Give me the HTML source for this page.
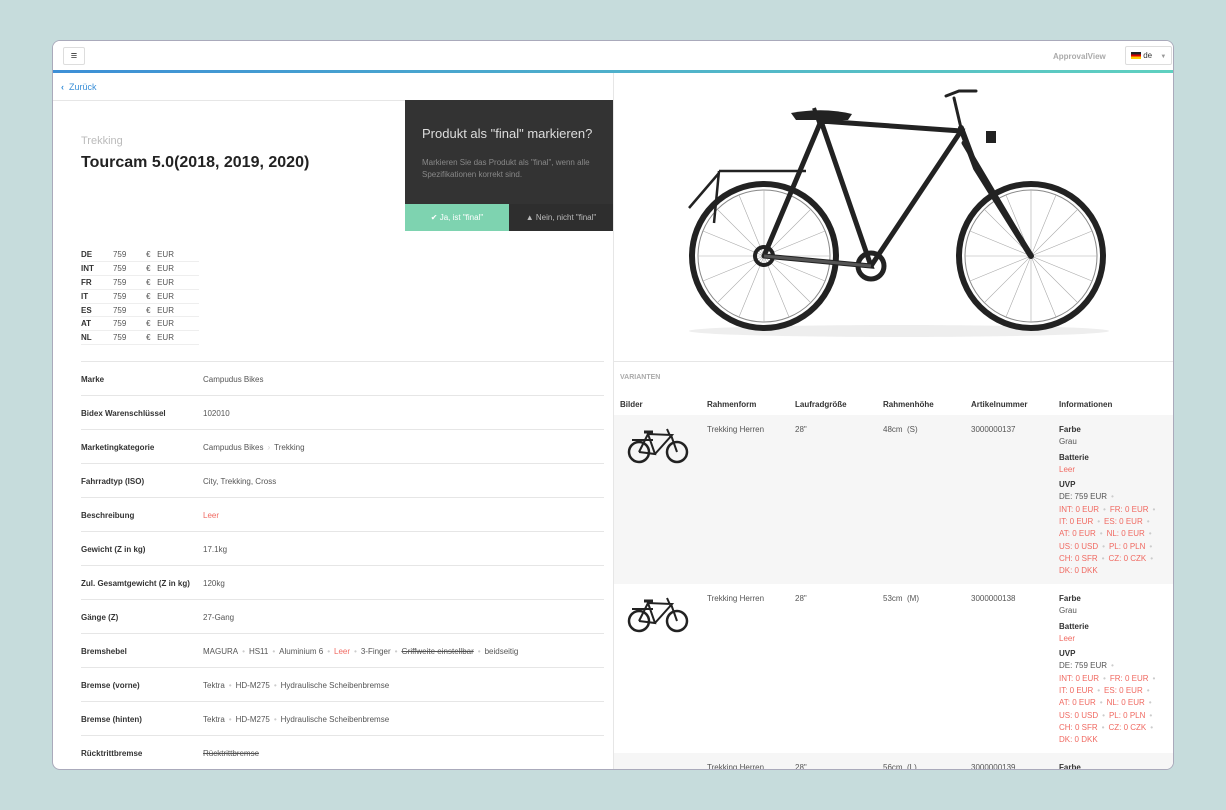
<!DOCTYPE html>
<html><head><meta charset="utf-8"><style>
*{box-sizing:border-box;margin:0;padding:0}
body{width:1226px;height:810px;background:#c6dcdc;font-family:"Liberation Sans",sans-serif;position:relative;overflow:hidden;color:#333}
.win{position:absolute;left:52px;top:40px;width:1122px;height:730px;background:#fff;border-radius:8px;overflow:hidden;border:1px solid #aab}
.abs{position:absolute}
.hdr{left:0;top:0;width:100%;height:29px;background:#fff}
.grad{left:0;top:29px;width:100%;height:3px;background:linear-gradient(90deg,#3d8fd6,#5fd0c0)}
.burger{left:10px;top:6px;width:22px;height:18px;border:1px solid #ddd;border-radius:2px;font-size:11px;text-align:center;line-height:16px}
.spec{position:absolute;left:28px;width:523px;height:34px;border-top:1px solid #e6e6e6;font-size:8px}
.spec b{position:absolute;left:0;top:13px;color:#333}
.spec span{position:absolute;left:122px;top:13px;color:#555}
.dot{color:#ccc;margin:0 4px}
.red,.spec span.red{color:#f06a62}
.pt td{font-size:8px;height:13.8px;border-bottom:1px solid #eee;color:#555;padding:0}
.th{position:absolute;top:359px;font-size:8px;font-weight:bold;color:#333}
.info{position:absolute;left:445px;font-size:8px;line-height:12.3px;color:#555}
.info b{color:#333}
.c{position:absolute;font-size:8px;color:#555}
</style></head><body>
<div class="win">
<div class="abs hdr"></div>
<div class="abs burger">≡</div>
<div class="abs" style="left:1000px;top:11px;font-size:8px;color:#aaa;font-weight:bold">ApprovalView</div>
<div class="abs" style="left:1072px;top:5px;width:47px;height:19px;border:1px solid #ddd;border-radius:2px;font-size:8px;line-height:17px;padding-left:5px"><span style="display:inline-block;width:10px;height:7px;background:linear-gradient(#222 33%,#d00 33% 66%,#fc0 66%);vertical-align:-1px"></span> de <span style="color:#999;margin-left:6px;font-size:6px">▼</span></div>
<div class="abs grad"></div>
<div class="abs" style="left:560px;top:32px;width:1px;height:700px;background:#e6e6e6"></div>
<div class="abs" style="left:0;top:59px;width:560px;height:1px;background:#e6e6e6"></div>
<div class="abs" style="left:8px;top:41px;font-size:9px;color:#3a8fd8"><b>‹</b>&nbsp; Zurück</div>
<div class="abs" style="left:28px;top:94px;font-size:11px;color:#bbb">Trekking</div>
<div class="abs" style="left:28px;top:113px;font-size:16px;font-weight:bold;color:#222">Tourcam 5.0(2018, 2019, 2020)</div>
<div class="abs" style="left:352px;top:59px;width:208px;height:104px;background:#333"></div>
<div class="abs" style="left:369px;top:85px;font-size:13px;color:#ddd">Produkt als "final" markieren?</div>
<div class="abs" style="left:369px;top:116px;font-size:8px;color:#888;line-height:12px;width:180px">Markieren Sie das Produkt als "final", wenn alle Spezifikationen korrekt sind.</div>
<div class="abs" style="left:352px;top:163px;width:104px;height:27px;background:#7ed3b0;color:#fff;font-size:8px;text-align:center;line-height:27px">✔ Ja, ist "final"</div>
<div class="abs" style="left:456px;top:163px;width:104px;height:27px;background:#2e2e2e;color:#bbb;font-size:8px;text-align:center;line-height:27px">▲ Nein, nicht "final"</div>
<table class="abs pt" style="left:28px;top:207px;width:118px;border-collapse:collapse">
<tr><td><b style="color:#333">DE</b></td><td>759</td><td>€</td><td>EUR</td></tr>
<tr><td><b style="color:#333">INT</b></td><td>759</td><td>€</td><td>EUR</td></tr>
<tr><td><b style="color:#333">FR</b></td><td>759</td><td>€</td><td>EUR</td></tr>
<tr><td><b style="color:#333">IT</b></td><td>759</td><td>€</td><td>EUR</td></tr>
<tr><td><b style="color:#333">ES</b></td><td>759</td><td>€</td><td>EUR</td></tr>
<tr><td><b style="color:#333">AT</b></td><td>759</td><td>€</td><td>EUR</td></tr>
<tr><td><b style="color:#333">NL</b></td><td>759</td><td>€</td><td>EUR</td></tr>
</table>
<div class="spec" style="top:320px"><b>Marke</b><span>Campudus Bikes</span></div>
<div class="spec" style="top:354px"><b>Bidex Warenschlüssel</b><span>102010</span></div>
<div class="spec" style="top:388px"><b>Marketingkategorie</b><span>Campudus Bikes<i class="dot">›</i>Trekking</span></div>
<div class="spec" style="top:422px"><b>Fahrradtyp (ISO)</b><span>City, Trekking, Cross</span></div>
<div class="spec" style="top:456px"><b>Beschreibung</b><span class="red">Leer</span></div>
<div class="spec" style="top:490px"><b>Gewicht (Z in kg)</b><span>17.1kg</span></div>
<div class="spec" style="top:524px"><b>Zul. Gesamtgewicht (Z in kg)</b><span>120kg</span></div>
<div class="spec" style="top:558px"><b>Gänge (Z)</b><span>27-Gang</span></div>
<div class="spec" style="top:592px"><b>Bremshebel</b><span>MAGURA<i class="dot">•</i>HS11<i class="dot">•</i>Aluminium 6<i class="dot">•</i><em class="red" style="font-style:normal">Leer</em><i class="dot">•</i>3-Finger<i class="dot">•</i><s>Griffweite einstellbar</s><i class="dot">•</i>beidseitig</span></div>
<div class="spec" style="top:626px"><b>Bremse (vorne)</b><span>Tektra<i class="dot">•</i>HD-M275<i class="dot">•</i>Hydraulische Scheibenbremse</span></div>
<div class="spec" style="top:660px"><b>Bremse (hinten)</b><span>Tektra<i class="dot">•</i>HD-M275<i class="dot">•</i>Hydraulische Scheibenbremse</span></div>
<div class="spec" style="top:694px"><b>Rücktrittbremse</b><span><s>Rücktrittbremse</s></span></div>
<div class="spec" style="top:728px"></div>

<svg class="abs" style="left:561px;top:32px" width="561" height="288" viewBox="0 0 561 288">
<ellipse cx="285" cy="258" rx="210" ry="6" fill="#eee"/>
<g fill="none" stroke="#222">
<circle cx="150" cy="183" r="72" stroke-width="6"/><circle cx="150" cy="183" r="66" stroke-width="1" stroke="#888"/>
<circle cx="417" cy="183" r="72" stroke-width="6"/><circle cx="417" cy="183" r="66" stroke-width="1" stroke="#888"/>
<g stroke="#aaa" stroke-width=".6">
<path d="M150 117V249M84 183H216M103 136L197 230M197 136L103 230M125 122L175 244M175 122L125 244M89 158L211 208M89 208L211 158"/>
<path d="M417 117V249M351 183H483M370 136L464 230M464 136L370 230M392 122L442 244M442 122L392 244M356 158L478 208M356 208L478 158"/>
</g>
<path d="M150 183L257 193L207 48L347 58L257 193M207 48L150 183M350 70L417 183" stroke-width="5" stroke-linecap="round"/>
<path d="M347 55L362 95L417 183" stroke-width="6" stroke-linecap="round"/>
<path d="M200 35L207 55" stroke-width="4"/>
<path d="M332 23L345 18L362 18M340 25L347 55" stroke-width="3" stroke-linecap="round"/>
<path d="M105 98H192M105 98L100 150M75 135L105 100" stroke-width="2.5"/>
<circle cx="257" cy="193" r="13" stroke-width="5"/>
<circle cx="150" cy="183" r="9" stroke-width="4"/>
<path d="M150 183L257 193" stroke-width="3" stroke="#555"/>
</g>
<path d="M177 40Q210 34 238 41L234 47H182Z" fill="#222"/>
<rect x="372" y="58" width="10" height="12" fill="#222"/>
</svg>
<div class="abs" style="left:561px;top:320px;width:561px;height:1px;background:#e6e6e6"></div>
<div class="abs" style="left:567px;top:333px;font-size:7px;color:#aaa;font-weight:bold">VARIANTEN</div>
<div class="th" style="left:567px">Bilder</div><div class="th" style="left:654px">Rahmenform</div><div class="th" style="left:742px">Laufradgröße</div><div class="th" style="left:830px">Rahmenhöhe</div><div class="th" style="left:918px">Artikelnummer</div><div class="th" style="left:1006px">Informationen</div>
<div class="abs" style="left:561px;top:374px;width:561px;height:169px;background:#f6f6f6"></div>
<div class="abs" style="left:561px;top:712px;width:561px;height:30px;background:#f6f6f6"></div>
<svg class="abs" style="left:574px;top:385px" width="62" height="40" viewBox="0 0 62 40"><g fill="none" stroke="#222"><circle cx="12" cy="26" r="10" stroke-width="2.5"/><circle cx="50" cy="26" r="10" stroke-width="2.5"/><path d="M12 26L28 28L21 8L45 9L28 28M21 8L12 26M44 9L50 26M40 3L44 12M5 14H26" stroke-width="2"/><path d="M17 6H26" stroke-width="3"/></g></svg>
<svg class="abs" style="left:574px;top:554px" width="62" height="40" viewBox="0 0 62 40"><g fill="none" stroke="#222"><circle cx="12" cy="26" r="10" stroke-width="2.5"/><circle cx="50" cy="26" r="10" stroke-width="2.5"/><path d="M12 26L28 28L21 8L45 9L28 28M21 8L12 26M44 9L50 26M40 3L44 12M5 14H26" stroke-width="2"/><path d="M17 6H26" stroke-width="3"/></g></svg>
<div class="c" style="left:654px;top:384px">Trekking Herren</div><div class="c" style="left:742px;top:384px">28"</div><div class="c" style="left:830px;top:384px">48cm &nbsp;(S)</div><div class="c" style="left:918px;top:384px">3000000137</div>
<div class="c" style="left:654px;top:553px">Trekking Herren</div><div class="c" style="left:742px;top:553px">28"</div><div class="c" style="left:830px;top:553px">53cm &nbsp;(M)</div><div class="c" style="left:918px;top:553px">3000000138</div>
<div class="c" style="left:654px;top:722px">Trekking Herren</div><div class="c" style="left:742px;top:722px">28"</div><div class="c" style="left:830px;top:722px">56cm &nbsp;(L)</div><div class="c" style="left:918px;top:722px">3000000139</div>
<div class="info" style="left:1006px;top:383px"><b>Farbe</b><br>Grau<br><div style="height:3px"></div><b>Batterie</b><br><span class="red">Leer</span><br><div style="height:3px"></div><b>UVP</b><br>DE: 759 EUR<i class="dot">•</i><br><span class="red">INT: 0 EUR<i class="dot">•</i>FR: 0 EUR<i class="dot">•</i><br>IT: 0 EUR<i class="dot">•</i>ES: 0 EUR<i class="dot">•</i><br>AT: 0 EUR<i class="dot">•</i>NL: 0 EUR<i class="dot">•</i><br>US: 0 USD<i class="dot">•</i>PL: 0 PLN<i class="dot">•</i><br>CH: 0 SFR<i class="dot">•</i>CZ: 0 CZK<i class="dot">•</i><br>DK: 0 DKK</span></div>
<div class="info" style="left:1006px;top:552px"><b>Farbe</b><br>Grau<br><div style="height:3px"></div><b>Batterie</b><br><span class="red">Leer</span><br><div style="height:3px"></div><b>UVP</b><br>DE: 759 EUR<i class="dot">•</i><br><span class="red">INT: 0 EUR<i class="dot">•</i>FR: 0 EUR<i class="dot">•</i><br>IT: 0 EUR<i class="dot">•</i>ES: 0 EUR<i class="dot">•</i><br>AT: 0 EUR<i class="dot">•</i>NL: 0 EUR<i class="dot">•</i><br>US: 0 USD<i class="dot">•</i>PL: 0 PLN<i class="dot">•</i><br>CH: 0 SFR<i class="dot">•</i>CZ: 0 CZK<i class="dot">•</i><br>DK: 0 DKK</span></div>
<div class="info" style="left:1006px;top:721px"><b>Farbe</b></div>
</div>
</body></html>
